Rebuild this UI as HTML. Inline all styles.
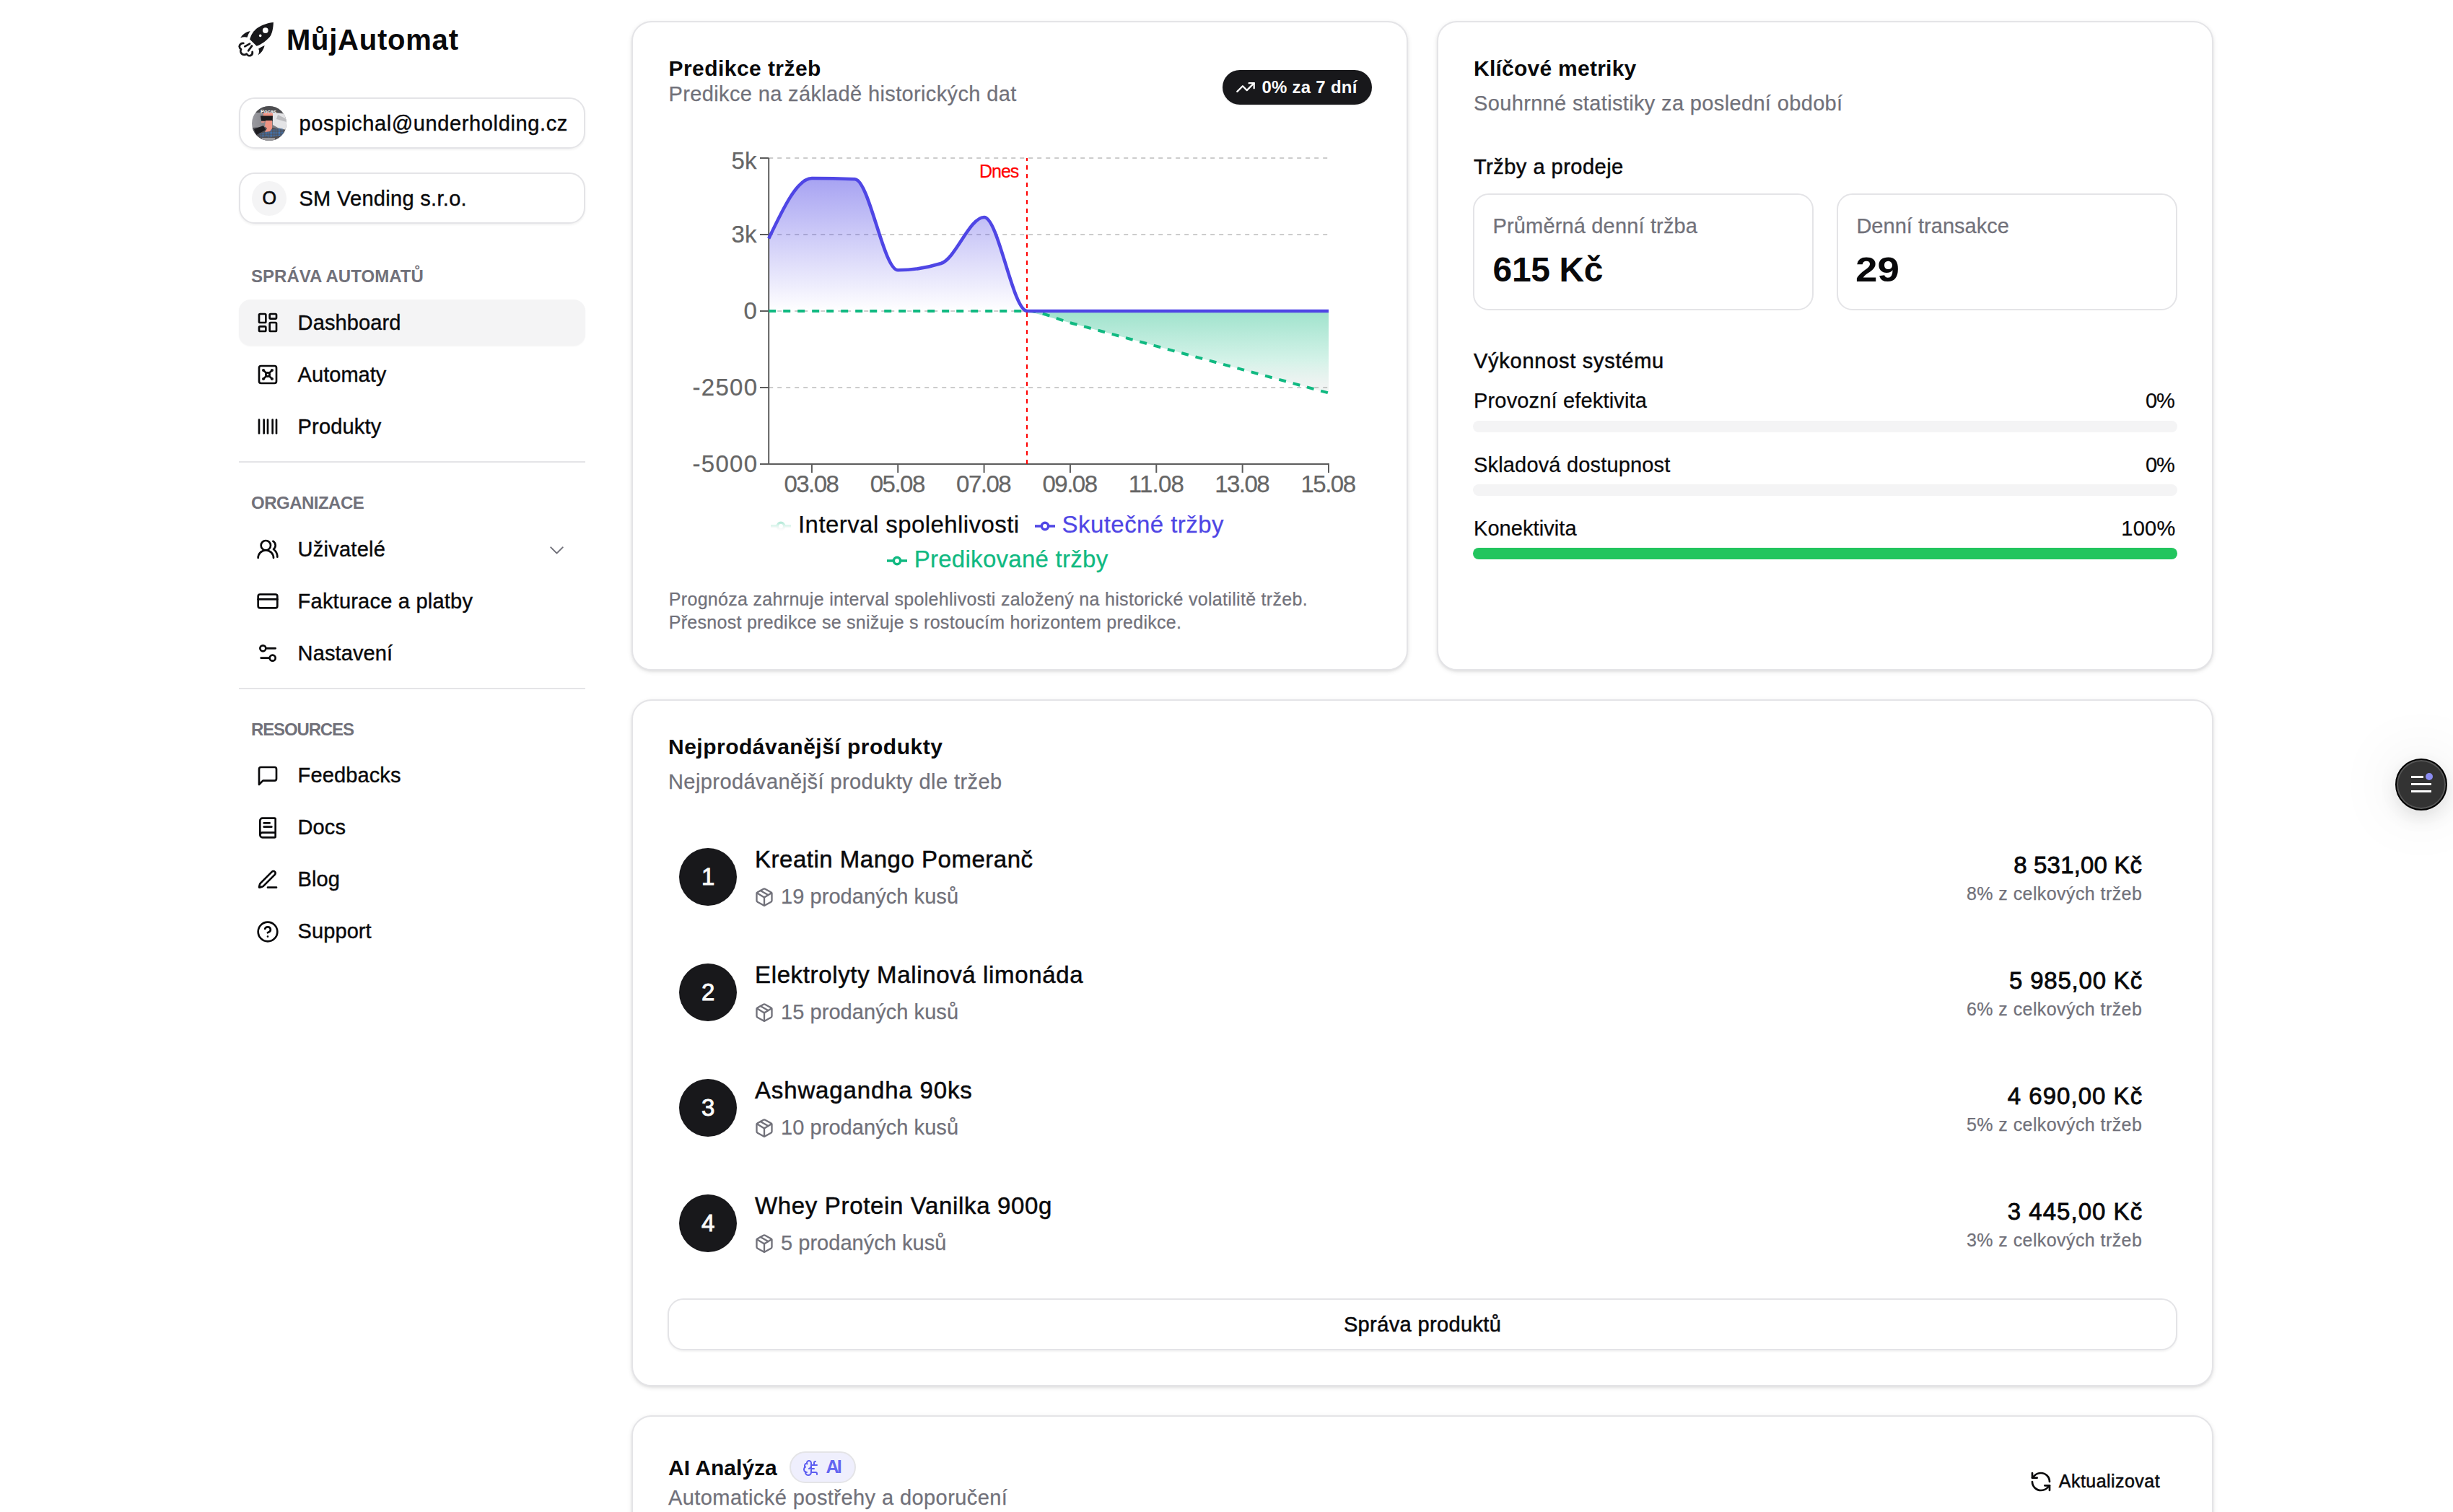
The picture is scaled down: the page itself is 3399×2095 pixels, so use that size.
<!DOCTYPE html><html><head><meta charset="utf-8"><style>
html,body{margin:0;padding:0;width:3399px;height:2095px;overflow:hidden;background:#fff;}
body{position:relative;font-family:"Liberation Sans",sans-serif;color:#09090b;}
.t{position:absolute;white-space:nowrap;font-family:"Liberation Sans",sans-serif;}
svg{overflow:visible}
</style></head><body>
<svg style="position:absolute;left:326px;top:26px" width="58" height="58" viewBox="0 0 58 58">
<path fill="#18181b" d="M52.9,5 C46,5.6 37,8.5 30.7,12.7 C26,16 22,21.5 20.1,28.4 L29.5,37.8 C36,35.5 43,30.5 47.9,24.9 C51,21 52.6,13 52.9,5 Z"/>
<circle cx="41.8" cy="16.1" r="3.9" fill="#fff"/><circle cx="34.7" cy="23.4" r="1.8" fill="#fff"/>
<path fill="#18181b" d="M20.7,17.1 Q11.5,19 7.1,26.5 Q12,24.6 16.5,25.7 Q18.2,20.8 20.7,17.1 Z"/>
<path fill="#18181b" d="M40.7,37 Q38.5,46 31.3,50.6 Q34.2,45.8 32.2,41.4 Q36.3,38.6 40.7,37 Z"/>
<path fill="none" stroke="#18181b" stroke-width="2.8" stroke-linecap="round" d="M13.3,38.4 L20,34.6 M18.2,44.3 L23,37.6"/>
<path fill="none" stroke="#18181b" stroke-width="2.8" stroke-linecap="round" stroke-linejoin="round" d="M11.3,33.8 C8.5,33.6 6,35.2 5.8,38.5 C5.6,40.5 7,41.6 8,42.4 C6.9,44.3 7.2,47.5 10,49.2 C12,50.3 14.3,49.6 15.7,48.7 C16.8,50.8 19.5,51.8 21.6,50.8 C23.6,49.8 24,47.6 23.7,46"/>
</svg>
<div class="t" style="left:396.90px;top:35px;font-size:40px;line-height:40px;font-weight:700;color:#09090b;letter-spacing:0.778px;">MůjAutomat</div>
<div style="position:absolute;left:331px;top:135px;width:480px;height:71px;box-sizing:border-box;border:2px solid #e4e4e7;border-radius:22px;background:#fff;box-shadow:0 2px 3px rgba(0,0,0,0.05)"></div>
<svg style="position:absolute;left:349px;top:147px" width="48" height="48" viewBox="0 0 48 48">
<defs><clipPath id="avc"><circle cx="24" cy="24" r="24"/></clipPath>
<pattern id="dots" width="2.2" height="2.2" patternUnits="userSpaceOnUse"><circle cx="1.1" cy="1.1" r="0.7" fill="#3b82d6"/></pattern>
<linearGradient id="avl" x1="0" y1="0" x2="1" y2="0"><stop offset="0" stop-color="#9a9aa0"/><stop offset="1" stop-color="#6a6a6e"/></linearGradient></defs>
<g clip-path="url(#avc)"><rect width="48" height="48" fill="url(#avl)"/>
<rect x="0" y="0" width="48" height="9" fill="#4d4d50"/>
<path d="M29 9 L48 11 L48 33 L36 30 L29 26 Z" fill="#e4e4e6"/>
<path d="M36 12 L48 18 L48 22 L34 18 Z" fill="#bdbdc0"/>
<path d="M0 30 L0 48 L48 48 L48 34 L30 30 L16 29 Z" fill="#505055"/>
<path d="M18 34 L42 30 L46 40 L22 44 Z" fill="url(#dots)"/>
<path d="M10 38 L20 36 L22 42 L12 44 Z" fill="url(#dots)" opacity="0.8"/>
<path d="M3 32 L16 27 L19 33 L6 40 Z" fill="#1c1c20"/>
<rect x="16" y="9" width="13" height="5" fill="#ee9484"/>
<path d="M12 13.5 L29 13.5 L28.5 21 L13 20.5 Z" fill="#1b1b1d"/>
<path d="M19 20 L28 20 L28 31 L25 35 L18 36 L21 31 L18 28 Z" fill="#ee9484"/>
<path d="M13 21 L18 21 L17 23 L13 23 Z" fill="#ee9484" opacity="0.8"/>
<text x="23" y="9.6" font-size="7.5" font-weight="700" fill="#f2f2f2" text-anchor="middle" font-family="Liberation Sans">Pocas</text>
<rect x="14" y="44" width="18" height="4" fill="#c8c8cc" opacity="0.6"/>
</g></svg>
<div class="t" style="left:414.60px;top:157px;font-size:29px;line-height:29px;font-weight:400;color:#09090b;letter-spacing:0.625px;-webkit-text-stroke:0.4px currentColor;">pospichal@underholding.cz</div>
<div style="position:absolute;left:331px;top:239px;width:480px;height:71px;box-sizing:border-box;border:2px solid #e4e4e7;border-radius:22px;background:#fff;box-shadow:0 2px 3px rgba(0,0,0,0.05)"></div>
<div style="position:absolute;left:349px;top:251px;width:48px;height:48px;box-sizing:border-box;border-radius:50%;background:#f4f4f5"></div>
<div class="t" style="left:363.50px;top:262px;font-size:25px;line-height:25px;font-weight:400;color:#09090b;letter-spacing:0.000px;-webkit-text-stroke:0.7px currentColor;">O</div>
<div class="t" style="left:414.40px;top:261px;font-size:29px;line-height:29px;font-weight:400;color:#09090b;letter-spacing:0.312px;-webkit-text-stroke:0.4px currentColor;">SM Vending s.r.o.</div>
<div class="t" style="left:348.00px;top:371px;font-size:24px;line-height:24px;font-weight:700;color:#71717a;letter-spacing:0.043px;">SPRÁVA AUTOMATŮ</div>
<div class="t" style="left:348.00px;top:684.5px;font-size:24px;line-height:24px;font-weight:700;color:#71717a;letter-spacing:-0.511px;">ORGANIZACE</div>
<div class="t" style="left:348.00px;top:999px;font-size:24px;line-height:24px;font-weight:700;color:#71717a;letter-spacing:-1.137px;">RESOURCES</div>
<div style="position:absolute;left:331px;top:415px;width:480px;height:64px;box-sizing:border-box;border-radius:16px;background:#f4f4f5;box-shadow:0 1px 2px rgba(0,0,0,0.04)"></div>
<svg style="position:absolute;left:355px;top:431px;" width="32" height="32" viewBox="0 0 24 24" fill="none" stroke="#09090b" stroke-width="2" stroke-linecap="round" stroke-linejoin="round"><rect width="7" height="9" x="3" y="3" rx="1"/><rect width="7" height="5" x="14" y="3" rx="1"/><rect width="7" height="9" x="14" y="12" rx="1"/><rect width="7" height="5" x="3" y="16" rx="1"/></svg>
<div class="t" style="left:412.60px;top:433px;font-size:29px;line-height:29px;font-weight:400;color:#09090b;letter-spacing:0.125px;-webkit-text-stroke:0.4px currentColor;">Dashboard</div>
<svg style="position:absolute;left:355px;top:503px;" width="32" height="32" viewBox="0 0 24 24" fill="none" stroke="#09090b" stroke-width="2" stroke-linecap="round" stroke-linejoin="round"><rect width="18" height="18" x="3" y="3" rx="2"/><circle cx="7.5" cy="7.5" r=".5" fill="currentColor"/><path d="m7.9 7.9 2.7 2.7"/><circle cx="16.5" cy="7.5" r=".5" fill="currentColor"/><path d="m13.4 10.6 2.7-2.7"/><circle cx="7.5" cy="16.5" r=".5" fill="currentColor"/><path d="m7.9 16.1 2.7-2.7"/><circle cx="16.5" cy="16.5" r=".5" fill="currentColor"/><path d="m13.4 13.4 2.7 2.7"/><circle cx="12" cy="12" r="2"/></svg>
<div class="t" style="left:412.60px;top:505px;font-size:29px;line-height:29px;font-weight:400;color:#09090b;letter-spacing:0.036px;-webkit-text-stroke:0.4px currentColor;">Automaty</div>
<svg style="position:absolute;left:355px;top:575px;" width="32" height="32" viewBox="0 0 24 24" fill="none" stroke="#09090b" stroke-width="2" stroke-linecap="round" stroke-linejoin="round"><path d="M3 5v14"/><path d="M8 5v14"/><path d="M12 5v14"/><path d="M17 5v14"/><path d="M21 5v14"/></svg>
<div class="t" style="left:412.60px;top:577px;font-size:29px;line-height:29px;font-weight:400;color:#09090b;letter-spacing:0.179px;-webkit-text-stroke:0.4px currentColor;">Produkty</div>
<svg style="position:absolute;left:355px;top:745px;" width="32" height="32" viewBox="0 0 24 24" fill="none" stroke="#09090b" stroke-width="2" stroke-linecap="round" stroke-linejoin="round"><path d="M18 21a8 8 0 0 0-16 0"/><circle cx="10" cy="8" r="5"/><path d="M22 20c0-3.37-2-6.5-4-8a5 5 0 0 0-.45-8.3"/></svg>
<div class="t" style="left:412.60px;top:747px;font-size:29px;line-height:29px;font-weight:400;color:#09090b;letter-spacing:0.250px;-webkit-text-stroke:0.4px currentColor;">Uživatelé</div>
<svg style="position:absolute;left:355px;top:817px;" width="32" height="32" viewBox="0 0 24 24" fill="none" stroke="#09090b" stroke-width="2" stroke-linecap="round" stroke-linejoin="round"><rect width="20" height="14" x="2" y="5" rx="2"/><line x1="2" x2="22" y1="10" y2="10"/></svg>
<div class="t" style="left:412.60px;top:819px;font-size:29px;line-height:29px;font-weight:400;color:#09090b;letter-spacing:0.221px;-webkit-text-stroke:0.4px currentColor;">Fakturace a platby</div>
<svg style="position:absolute;left:355px;top:889px;" width="32" height="32" viewBox="0 0 24 24" fill="none" stroke="#09090b" stroke-width="2" stroke-linecap="round" stroke-linejoin="round"><path d="M20 7h-9"/><path d="M14 17H5"/><circle cx="17" cy="17" r="3"/><circle cx="7" cy="7" r="3"/></svg>
<div class="t" style="left:412.60px;top:891px;font-size:29px;line-height:29px;font-weight:400;color:#09090b;letter-spacing:0.125px;-webkit-text-stroke:0.4px currentColor;">Nastavení</div>
<svg style="position:absolute;left:355px;top:1059px;" width="32" height="32" viewBox="0 0 24 24" fill="none" stroke="#09090b" stroke-width="2" stroke-linecap="round" stroke-linejoin="round"><path d="M21 15a2 2 0 0 1-2 2H7l-4 4V5a2 2 0 0 1 2-2h14a2 2 0 0 1 2 2z"/></svg>
<div class="t" style="left:412.60px;top:1060px;font-size:29px;line-height:29px;font-weight:400;color:#09090b;letter-spacing:0.125px;-webkit-text-stroke:0.4px currentColor;">Feedbacks</div>
<svg style="position:absolute;left:355px;top:1131px;" width="32" height="32" viewBox="0 0 24 24" fill="none" stroke="#09090b" stroke-width="2" stroke-linecap="round" stroke-linejoin="round"><path d="M4 19.5v-15A2.5 2.5 0 0 1 6.5 2H19a1 1 0 0 1 1 1v18a1 1 0 0 1-1 1H6.5a1 1 0 0 1 0-5H20"/><path d="M8 11h8"/><path d="M8 7h6"/></svg>
<div class="t" style="left:412.60px;top:1132px;font-size:29px;line-height:29px;font-weight:400;color:#09090b;letter-spacing:0.083px;-webkit-text-stroke:0.4px currentColor;">Docs</div>
<svg style="position:absolute;left:355px;top:1203px;" width="32" height="32" viewBox="0 0 24 24" fill="none" stroke="#09090b" stroke-width="2" stroke-linecap="round" stroke-linejoin="round"><path d="M12 20h9"/><path d="M16.376 3.622a1 1 0 0 1 3.002 3.002L7.368 18.635a2 2 0 0 1-.855.506l-2.872.838a.5.5 0 0 1-.62-.62l.838-2.872a2 2 0 0 1 .506-.854z"/></svg>
<div class="t" style="left:412.60px;top:1204px;font-size:29px;line-height:29px;font-weight:400;color:#09090b;letter-spacing:0.083px;-webkit-text-stroke:0.4px currentColor;">Blog</div>
<svg style="position:absolute;left:355px;top:1275px;" width="32" height="32" viewBox="0 0 24 24" fill="none" stroke="#09090b" stroke-width="2" stroke-linecap="round" stroke-linejoin="round"><circle cx="12" cy="12" r="10"/><path d="M9.09 9a3 3 0 0 1 5.83 1c0 2-3 3-3 3"/><path d="M12 17h.01"/></svg>
<div class="t" style="left:412.60px;top:1276px;font-size:29px;line-height:29px;font-weight:400;color:#09090b;letter-spacing:0.083px;-webkit-text-stroke:0.4px currentColor;">Support</div>
<svg style="position:absolute;left:755px;top:746px;" width="33" height="33" viewBox="0 0 24 24" fill="none" stroke="#71717a" stroke-width="1.4" stroke-linecap="round" stroke-linejoin="round"><path d="m6 9 6 6 6-6"/></svg>
<div style="position:absolute;left:331px;top:639px;width:480px;height:2px;box-sizing:border-box;background:#e4e4e7"></div>
<div style="position:absolute;left:331px;top:953px;width:480px;height:2px;box-sizing:border-box;background:#e4e4e7"></div>
<div style="position:absolute;left:875px;top:29px;width:1076px;height:900px;box-sizing:border-box;border:2px solid #e4e4e7;border-radius:28px;background:#fff;box-shadow:0 2px 6px rgba(0,0,0,0.1),0 2px 4px -2px rgba(0,0,0,0.1)"></div>
<div class="t" style="left:926.50px;top:80px;font-size:30px;line-height:30px;font-weight:700;color:#09090b;letter-spacing:0.446px;">Predikce tržeb</div>
<div class="t" style="left:926.50px;top:116px;font-size:29px;line-height:29px;font-weight:400;color:#71717a;letter-spacing:0.363px;-webkit-text-stroke:0.25px currentColor;">Predikce na základě historických dat</div>
<div style="position:absolute;left:1694px;top:97px;width:207px;height:48px;box-sizing:border-box;border-radius:24px;background:#18181b;box-shadow:0 1px 2px rgba(0,0,0,0.1)"></div>
<svg style="position:absolute;left:1711.8px;top:106.8px;" width="28" height="28" viewBox="0 0 24 24" fill="none" stroke="#fafafa" stroke-width="2" stroke-linecap="round" stroke-linejoin="round"><polyline points="22 7 13.5 15.5 8.5 10.5 2 17"/><polyline points="16 7 22 7 22 13"/></svg>
<div class="t" style="left:1748.50px;top:109px;font-size:24px;line-height:24px;font-weight:700;color:#fafafa;letter-spacing:0.250px;">0% za 7 dní</div>
<svg style="position:absolute;left:0;top:0" width="3399" height="2095" viewBox="0 0 3399 2095">
<defs><linearGradient id="gA" x1="0" y1="0" x2="0" y2="1"><stop offset="0" stop-color="#4f46e5" stop-opacity="0.5"/><stop offset="1" stop-color="#4f46e5" stop-opacity="0"/></linearGradient><linearGradient id="gL" x1="0" y1="0" x2="0" y2="1"><stop offset="0" stop-color="#10b981" stop-opacity="0.3"/><stop offset="0.5" stop-color="#10b981" stop-opacity="0.12"/><stop offset="1" stop-color="#888" stop-opacity="0.03"/></linearGradient><linearGradient id="gP" x1="0" y1="0" x2="0" y2="1"><stop offset="0" stop-color="#10b981" stop-opacity="0.4"/><stop offset="0.6" stop-color="#10b981" stop-opacity="0.18"/><stop offset="1" stop-color="#9a9a9a" stop-opacity="0.1"/></linearGradient></defs>
<line x1="1065.2" x2="1841" y1="219" y2="219" stroke="#ccc" stroke-width="2" stroke-dasharray="6 6"/>
<line x1="1065.2" x2="1841" y1="325" y2="325" stroke="#ccc" stroke-width="2" stroke-dasharray="6 6"/>
<line x1="1065.2" x2="1841" y1="431" y2="431" stroke="#ccc" stroke-width="2" stroke-dasharray="6 6"/>
<line x1="1065.2" x2="1841" y1="537" y2="537" stroke="#ccc" stroke-width="2" stroke-dasharray="6 6"/>
<path d="M1065.20,330.60C1085.09,288.80 1104.98,247.00 1124.88,247.00C1144.77,247.00 1164.66,247.43 1184.55,248.30C1204.45,249.17 1224.34,374.30 1244.23,374.30C1264.12,374.30 1284.02,371.20 1303.91,365.00C1323.80,358.80 1343.69,301.00 1363.58,301.00C1383.48,301.00 1403.37,431.00 1423.26,431.00C1443.15,431.00 1463.05,431.00 1482.94,431.00C1502.83,431.00 1522.72,431.00 1542.62,431.00C1562.51,431.00 1582.40,431.00 1602.29,431.00C1622.18,431.00 1642.08,431.00 1661.97,431.00C1681.86,431.00 1701.75,431.00 1721.65,431.00C1741.54,431.00 1761.43,431.00 1781.32,431.00C1801.22,431.00 1821.11,431.00 1841.00,431.00L1841.00,431L1065.20,431Z" fill="url(#gA)"/>
<path d="M1423.26,431L1841.00,431L1841.00,544.5L1423.26,431Z" fill="url(#gP)"/>
<line x1="1065.2" x2="1065.2" y1="219" y2="643" stroke="#5c5c5c" stroke-width="2"/>
<line x1="1065.2" x2="1842" y1="643" y2="643" stroke="#5c5c5c" stroke-width="2"/>
<line x1="1053" x2="1065.2" y1="219" y2="219" stroke="#5c5c5c" stroke-width="2"/>
<line x1="1053" x2="1065.2" y1="325" y2="325" stroke="#5c5c5c" stroke-width="2"/>
<line x1="1053" x2="1065.2" y1="431" y2="431" stroke="#5c5c5c" stroke-width="2"/>
<line x1="1053" x2="1065.2" y1="537" y2="537" stroke="#5c5c5c" stroke-width="2"/>
<line x1="1053" x2="1065.2" y1="643" y2="643" stroke="#5c5c5c" stroke-width="2"/>
<line x1="1124.88" x2="1124.88" y1="643" y2="655" stroke="#5c5c5c" stroke-width="2"/>
<line x1="1244.23" x2="1244.23" y1="643" y2="655" stroke="#5c5c5c" stroke-width="2"/>
<line x1="1363.58" x2="1363.58" y1="643" y2="655" stroke="#5c5c5c" stroke-width="2"/>
<line x1="1482.94" x2="1482.94" y1="643" y2="655" stroke="#5c5c5c" stroke-width="2"/>
<line x1="1602.29" x2="1602.29" y1="643" y2="655" stroke="#5c5c5c" stroke-width="2"/>
<line x1="1721.65" x2="1721.65" y1="643" y2="655" stroke="#5c5c5c" stroke-width="2"/>
<line x1="1841.00" x2="1841.00" y1="643" y2="655" stroke="#5c5c5c" stroke-width="2"/>
<path d="M1065.20,431.00C1085.09,431.00 1104.98,431.00 1124.88,431.00C1144.77,431.00 1164.66,431.00 1184.55,431.00C1204.45,431.00 1224.34,431.00 1244.23,431.00C1264.12,431.00 1284.02,431.00 1303.91,431.00C1323.80,431.00 1343.69,431.00 1363.58,431.00C1383.48,431.00 1403.37,431.00 1423.26,431.00C1443.15,431.00 1463.05,441.81 1482.94,447.21C1502.83,452.62 1522.72,458.02 1542.62,463.43C1562.51,468.83 1582.40,474.24 1602.29,479.64C1622.18,485.05 1642.08,490.45 1661.97,495.86C1681.86,501.26 1701.75,506.67 1721.65,512.07C1741.54,517.48 1761.43,522.88 1781.32,528.29C1801.22,533.69 1821.11,539.10 1841.00,544.50" fill="none" stroke="#10b981" stroke-width="4" stroke-dasharray="10 10"/>
<path d="M1065.20,330.60C1085.09,288.80 1104.98,247.00 1124.88,247.00C1144.77,247.00 1164.66,247.43 1184.55,248.30C1204.45,249.17 1224.34,374.30 1244.23,374.30C1264.12,374.30 1284.02,371.20 1303.91,365.00C1323.80,358.80 1343.69,301.00 1363.58,301.00C1383.48,301.00 1403.37,431.00 1423.26,431.00C1443.15,431.00 1463.05,431.00 1482.94,431.00C1502.83,431.00 1522.72,431.00 1542.62,431.00C1562.51,431.00 1582.40,431.00 1602.29,431.00C1622.18,431.00 1642.08,431.00 1661.97,431.00C1681.86,431.00 1701.75,431.00 1721.65,431.00C1741.54,431.00 1761.43,431.00 1781.32,431.00C1801.22,431.00 1821.11,431.00 1841.00,431.00" fill="none" stroke="#4f46e5" stroke-width="4.6"/>
<line x1="1423" x2="1423" y1="219" y2="643" stroke="#ff0000" stroke-width="2" stroke-dasharray="6 6" stroke-dashoffset="2"/>
<g transform="translate(1068,715) scale(0.875)"><path stroke-width="4" fill="none" stroke="url(#gL)" d="M0,16h10.667A5.333,5.333,0,1,1,21.333,16H32M21.333,16A5.333,5.333,0,1,1,10.667,16"/></g>
<g transform="translate(1434,715) scale(0.875)" opacity="1"><path stroke-width="4" fill="none" stroke="#4f46e5" d="M0,16h10.667A5.333,5.333,0,1,1,21.333,16H32M21.333,16A5.333,5.333,0,1,1,10.667,16"/></g>
<g transform="translate(1229,763) scale(0.875)" opacity="1"><path stroke-width="4" fill="none" stroke="#10b981" d="M0,16h10.667A5.333,5.333,0,1,1,21.333,16H32M21.333,16A5.333,5.333,0,1,1,10.667,16"/></g>
</svg>
<div class="t" style="left:1013.60px;top:206px;font-size:33px;line-height:33px;font-weight:400;color:#666;letter-spacing:0.000px;-webkit-text-stroke:0.25px currentColor;">5k</div>
<div class="t" style="left:1013.60px;top:308px;font-size:33px;line-height:33px;font-weight:400;color:#666;letter-spacing:0.000px;-webkit-text-stroke:0.25px currentColor;">3k</div>
<div class="t" style="left:1030.60px;top:414px;font-size:33px;line-height:33px;font-weight:400;color:#666;letter-spacing:0.000px;-webkit-text-stroke:0.25px currentColor;">0</div>
<div class="t" style="left:959.60px;top:520px;font-size:33px;line-height:33px;font-weight:400;color:#666;letter-spacing:1.250px;-webkit-text-stroke:0.25px currentColor;">-2500</div>
<div class="t" style="left:959.60px;top:626px;font-size:33px;line-height:33px;font-weight:400;color:#666;letter-spacing:1.250px;-webkit-text-stroke:0.25px currentColor;">-5000</div>
<div class="t" style="left:1086.38px;top:654px;font-size:33px;line-height:33px;font-weight:400;color:#666;letter-spacing:-1.500px;-webkit-text-stroke:0.25px currentColor;">03.08</div>
<div class="t" style="left:1205.73px;top:654px;font-size:33px;line-height:33px;font-weight:400;color:#666;letter-spacing:-1.500px;-webkit-text-stroke:0.25px currentColor;">05.08</div>
<div class="t" style="left:1325.08px;top:654px;font-size:33px;line-height:33px;font-weight:400;color:#666;letter-spacing:-1.500px;-webkit-text-stroke:0.25px currentColor;">07.08</div>
<div class="t" style="left:1444.44px;top:654px;font-size:33px;line-height:33px;font-weight:400;color:#666;letter-spacing:-1.500px;-webkit-text-stroke:0.25px currentColor;">09.08</div>
<div class="t" style="left:1563.79px;top:654px;font-size:33px;line-height:33px;font-weight:400;color:#666;letter-spacing:-0.750px;-webkit-text-stroke:0.25px currentColor;">11.08</div>
<div class="t" style="left:1683.15px;top:654px;font-size:33px;line-height:33px;font-weight:400;color:#666;letter-spacing:-1.500px;-webkit-text-stroke:0.25px currentColor;">13.08</div>
<div class="t" style="left:1802.50px;top:654px;font-size:33px;line-height:33px;font-weight:400;color:#666;letter-spacing:-1.500px;-webkit-text-stroke:0.25px currentColor;">15.08</div>
<div class="t" style="left:1357.00px;top:225px;font-size:25px;line-height:25px;font-weight:400;color:#ff0000;letter-spacing:-1.000px;-webkit-text-stroke:0.25px currentColor;">Dnes</div>
<div class="t" style="left:1106.00px;top:710px;font-size:33px;line-height:33px;font-weight:400;color:#09090b;letter-spacing:0.429px;-webkit-text-stroke:0.25px currentColor;">Interval spolehlivosti</div>
<div class="t" style="left:1471.60px;top:710px;font-size:33px;line-height:33px;font-weight:400;color:#4f46e5;letter-spacing:0.431px;-webkit-text-stroke:0.25px currentColor;">Skutečné tržby</div>
<div class="t" style="left:1266.70px;top:758px;font-size:33px;line-height:33px;font-weight:400;color:#10b981;letter-spacing:0.275px;-webkit-text-stroke:0.25px currentColor;">Predikované tržby</div>
<div class="t" style="left:926.80px;top:818px;font-size:25px;line-height:25px;font-weight:400;color:#71717a;letter-spacing:0.309px;-webkit-text-stroke:0.25px currentColor;">Prognóza zahrnuje interval spolehlivosti založený na historické volatilitě tržeb.</div>
<div class="t" style="left:926.80px;top:850px;font-size:25px;line-height:25px;font-weight:400;color:#71717a;letter-spacing:0.280px;-webkit-text-stroke:0.25px currentColor;">Přesnost predikce se snižuje s rostoucím horizontem predikce.</div>
<div style="position:absolute;left:1991px;top:29px;width:1076px;height:900px;box-sizing:border-box;border:2px solid #e4e4e7;border-radius:28px;background:#fff;box-shadow:0 2px 6px rgba(0,0,0,0.1),0 2px 4px -2px rgba(0,0,0,0.1)"></div>
<div class="t" style="left:2042.00px;top:80px;font-size:30px;line-height:30px;font-weight:700;color:#09090b;letter-spacing:0.250px;">Klíčové metriky</div>
<div class="t" style="left:2042.00px;top:129px;font-size:29px;line-height:29px;font-weight:400;color:#71717a;letter-spacing:0.351px;-webkit-text-stroke:0.25px currentColor;">Souhrnné statistiky za poslední období</div>
<div class="t" style="left:2042.00px;top:217px;font-size:29px;line-height:29px;font-weight:400;color:#09090b;letter-spacing:0.486px;-webkit-text-stroke:0.5px currentColor;">Tržby a prodeje</div>
<div style="position:absolute;left:2041px;top:268px;width:472px;height:162px;box-sizing:border-box;border:2px solid #e4e4e7;border-radius:22px;background:#fff"></div>
<div style="position:absolute;left:2545px;top:268px;width:472px;height:162px;box-sizing:border-box;border:2px solid #e4e4e7;border-radius:22px;background:#fff"></div>
<div class="t" style="left:2068.50px;top:299px;font-size:29px;line-height:29px;font-weight:400;color:#71717a;letter-spacing:0.158px;-webkit-text-stroke:0.25px currentColor;">Průměrná denní tržba</div>
<div class="t" style="left:2068.60px;top:350px;font-size:48px;line-height:48px;font-weight:700;color:#09090b;letter-spacing:-0.400px;">615 Kč</div>
<div class="t" style="left:2572.40px;top:299px;font-size:29px;line-height:29px;font-weight:400;color:#71717a;letter-spacing:0.029px;-webkit-text-stroke:0.25px currentColor;">Denní transakce</div>
<div class="t" style="left:2571.20px;top:350px;font-size:48px;line-height:48px;font-weight:700;color:#09090b;letter-spacing:0.000px;transform:scaleX(1.14);transform-origin:0 0;">29</div>
<div class="t" style="left:2042.00px;top:486px;font-size:29px;line-height:29px;font-weight:400;color:#09090b;letter-spacing:0.738px;-webkit-text-stroke:0.5px currentColor;">Výkonnost systému</div>
<div class="t" style="left:2042.00px;top:541px;font-size:29px;line-height:29px;font-weight:400;color:#09090b;letter-spacing:0.167px;-webkit-text-stroke:0.25px currentColor;">Provozní efektivita</div>
<div class="t" style="left:2973.10px;top:541px;font-size:29px;line-height:29px;font-weight:400;color:#09090b;letter-spacing:-1.100px;-webkit-text-stroke:0.25px currentColor;">0%</div>
<div style="position:absolute;left:2041px;top:583px;width:976px;height:16px;box-sizing:border-box;border-radius:8px;background:#f4f4f5"></div>
<div class="t" style="left:2042.00px;top:630px;font-size:29px;line-height:29px;font-weight:400;color:#09090b;letter-spacing:0.170px;-webkit-text-stroke:0.25px currentColor;">Skladová dostupnost</div>
<div class="t" style="left:2973.10px;top:630px;font-size:29px;line-height:29px;font-weight:400;color:#09090b;letter-spacing:-1.100px;-webkit-text-stroke:0.25px currentColor;">0%</div>
<div style="position:absolute;left:2041px;top:671px;width:976px;height:16px;box-sizing:border-box;border-radius:8px;background:#f4f4f5"></div>
<div class="t" style="left:2042.00px;top:718px;font-size:29px;line-height:29px;font-weight:400;color:#09090b;letter-spacing:0.070px;-webkit-text-stroke:0.25px currentColor;">Konektivita</div>
<div class="t" style="left:2939.30px;top:718px;font-size:29px;line-height:29px;font-weight:400;color:#09090b;letter-spacing:0.233px;-webkit-text-stroke:0.25px currentColor;">100%</div>
<div style="position:absolute;left:2041px;top:759px;width:976px;height:16px;box-sizing:border-box;border-radius:8px;background:#f4f4f5"></div>
<div style="position:absolute;left:2041px;top:759px;width:976px;height:16px;box-sizing:border-box;border-radius:8px;background:#22c55e"></div>
<div style="position:absolute;left:875px;top:969px;width:2192px;height:952px;box-sizing:border-box;border:2px solid #e4e4e7;border-radius:28px;background:#fff;box-shadow:0 2px 6px rgba(0,0,0,0.1),0 2px 4px -2px rgba(0,0,0,0.1)"></div>
<div class="t" style="left:926.00px;top:1020px;font-size:30px;line-height:30px;font-weight:700;color:#09090b;letter-spacing:0.496px;">Nejprodávanější produkty</div>
<div class="t" style="left:926.00px;top:1069px;font-size:29px;line-height:29px;font-weight:400;color:#71717a;letter-spacing:0.424px;-webkit-text-stroke:0.25px currentColor;">Nejprodávanější produkty dle tržeb</div>
<div style="position:absolute;left:941px;top:1175px;width:80px;height:80px;box-sizing:border-box;border-radius:50%;background:#18181b"></div>
<div class="t" style="left:972.00px;top:1198px;font-size:33px;line-height:33px;font-weight:400;color:#fafafa;letter-spacing:0.000px;-webkit-text-stroke:0.9px currentColor;">1</div>
<div class="t" style="left:1046.00px;top:1174px;font-size:33px;line-height:33px;font-weight:400;color:#09090b;letter-spacing:0.514px;-webkit-text-stroke:0.5px currentColor;">Kreatin Mango Pomeranč</div>
<svg style="position:absolute;left:1045px;top:1229px;" width="28" height="28" viewBox="0 0 24 24" fill="none" stroke="#71717a" stroke-width="2" stroke-linecap="round" stroke-linejoin="round"><path d="M11 21.73a2 2 0 0 0 2 0l7-4A2 2 0 0 0 21 16V8a2 2 0 0 0-1-1.73l-7-4a2 2 0 0 0-2 0l-7 4A2 2 0 0 0 3 8v8a2 2 0 0 0 1 1.73z"/><path d="M12 22V12"/><path d="m3.3 7 7.703 4.734a2 2 0 0 0 1.994 0L20.7 7"/><path d="m7.5 4.27 9 5.15"/></svg>
<div class="t" style="left:1082.00px;top:1228px;font-size:29px;line-height:29px;font-weight:400;color:#71717a;letter-spacing:0.060px;-webkit-text-stroke:0.25px currentColor;">19 prodaných kusů</div>
<div class="t" style="left:2790.20px;top:1182px;font-size:33px;line-height:33px;font-weight:400;color:#09090b;letter-spacing:0.180px;-webkit-text-stroke:0.8px currentColor;">8 531,00 Kč</div>
<div class="t" style="left:2725.00px;top:1226px;font-size:25px;line-height:25px;font-weight:400;color:#71717a;letter-spacing:0.421px;-webkit-text-stroke:0.25px currentColor;">8% z celkových tržeb</div>
<div style="position:absolute;left:941px;top:1335px;width:80px;height:80px;box-sizing:border-box;border-radius:50%;background:#18181b"></div>
<div class="t" style="left:972.00px;top:1358px;font-size:33px;line-height:33px;font-weight:400;color:#fafafa;letter-spacing:0.000px;-webkit-text-stroke:0.9px currentColor;">2</div>
<div class="t" style="left:1046.00px;top:1334px;font-size:33px;line-height:33px;font-weight:400;color:#09090b;letter-spacing:0.643px;-webkit-text-stroke:0.5px currentColor;">Elektrolyty Malinová limonáda</div>
<svg style="position:absolute;left:1045px;top:1389px;" width="28" height="28" viewBox="0 0 24 24" fill="none" stroke="#71717a" stroke-width="2" stroke-linecap="round" stroke-linejoin="round"><path d="M11 21.73a2 2 0 0 0 2 0l7-4A2 2 0 0 0 21 16V8a2 2 0 0 0-1-1.73l-7-4a2 2 0 0 0-2 0l-7 4A2 2 0 0 0 3 8v8a2 2 0 0 0 1 1.73z"/><path d="M12 22V12"/><path d="m3.3 7 7.703 4.734a2 2 0 0 0 1.994 0L20.7 7"/><path d="m7.5 4.27 9 5.15"/></svg>
<div class="t" style="left:1082.00px;top:1388px;font-size:29px;line-height:29px;font-weight:400;color:#71717a;letter-spacing:0.060px;-webkit-text-stroke:0.25px currentColor;">15 prodaných kusů</div>
<div class="t" style="left:2784.10px;top:1342px;font-size:33px;line-height:33px;font-weight:400;color:#09090b;letter-spacing:0.790px;-webkit-text-stroke:0.8px currentColor;">5 985,00 Kč</div>
<div class="t" style="left:2725.00px;top:1386px;font-size:25px;line-height:25px;font-weight:400;color:#71717a;letter-spacing:0.421px;-webkit-text-stroke:0.25px currentColor;">6% z celkových tržeb</div>
<div style="position:absolute;left:941px;top:1495px;width:80px;height:80px;box-sizing:border-box;border-radius:50%;background:#18181b"></div>
<div class="t" style="left:972.00px;top:1518px;font-size:33px;line-height:33px;font-weight:400;color:#fafafa;letter-spacing:0.000px;-webkit-text-stroke:0.9px currentColor;">3</div>
<div class="t" style="left:1046.00px;top:1494px;font-size:33px;line-height:33px;font-weight:400;color:#09090b;letter-spacing:0.853px;-webkit-text-stroke:0.5px currentColor;">Ashwagandha 90ks</div>
<svg style="position:absolute;left:1045px;top:1549px;" width="28" height="28" viewBox="0 0 24 24" fill="none" stroke="#71717a" stroke-width="2" stroke-linecap="round" stroke-linejoin="round"><path d="M11 21.73a2 2 0 0 0 2 0l7-4A2 2 0 0 0 21 16V8a2 2 0 0 0-1-1.73l-7-4a2 2 0 0 0-2 0l-7 4A2 2 0 0 0 3 8v8a2 2 0 0 0 1 1.73z"/><path d="M12 22V12"/><path d="m3.3 7 7.703 4.734a2 2 0 0 0 1.994 0L20.7 7"/><path d="m7.5 4.27 9 5.15"/></svg>
<div class="t" style="left:1082.00px;top:1548px;font-size:29px;line-height:29px;font-weight:400;color:#71717a;letter-spacing:0.060px;-webkit-text-stroke:0.25px currentColor;">10 prodaných kusů</div>
<div class="t" style="left:2781.80px;top:1502px;font-size:33px;line-height:33px;font-weight:400;color:#09090b;letter-spacing:1.020px;-webkit-text-stroke:0.8px currentColor;">4 690,00 Kč</div>
<div class="t" style="left:2725.00px;top:1546px;font-size:25px;line-height:25px;font-weight:400;color:#71717a;letter-spacing:0.421px;-webkit-text-stroke:0.25px currentColor;">5% z celkových tržeb</div>
<div style="position:absolute;left:941px;top:1655px;width:80px;height:80px;box-sizing:border-box;border-radius:50%;background:#18181b"></div>
<div class="t" style="left:972.00px;top:1678px;font-size:33px;line-height:33px;font-weight:400;color:#fafafa;letter-spacing:0.000px;-webkit-text-stroke:0.9px currentColor;">4</div>
<div class="t" style="left:1046.00px;top:1654px;font-size:33px;line-height:33px;font-weight:400;color:#09090b;letter-spacing:0.658px;-webkit-text-stroke:0.5px currentColor;">Whey Protein Vanilka 900g</div>
<svg style="position:absolute;left:1045px;top:1709px;" width="28" height="28" viewBox="0 0 24 24" fill="none" stroke="#71717a" stroke-width="2" stroke-linecap="round" stroke-linejoin="round"><path d="M11 21.73a2 2 0 0 0 2 0l7-4A2 2 0 0 0 21 16V8a2 2 0 0 0-1-1.73l-7-4a2 2 0 0 0-2 0l-7 4A2 2 0 0 0 3 8v8a2 2 0 0 0 1 1.73z"/><path d="M12 22V12"/><path d="m3.3 7 7.703 4.734a2 2 0 0 0 1.994 0L20.7 7"/><path d="m7.5 4.27 9 5.15"/></svg>
<div class="t" style="left:1082.00px;top:1708px;font-size:29px;line-height:29px;font-weight:400;color:#71717a;letter-spacing:0.027px;-webkit-text-stroke:0.25px currentColor;">5 prodaných kusů</div>
<div class="t" style="left:2781.80px;top:1662px;font-size:33px;line-height:33px;font-weight:400;color:#09090b;letter-spacing:1.020px;-webkit-text-stroke:0.8px currentColor;">3 445,00 Kč</div>
<div class="t" style="left:2725.00px;top:1706px;font-size:25px;line-height:25px;font-weight:400;color:#71717a;letter-spacing:0.421px;-webkit-text-stroke:0.25px currentColor;">3% z celkových tržeb</div>
<div style="position:absolute;left:925px;top:1799px;width:2092px;height:72px;box-sizing:border-box;border:2px solid #e4e4e7;border-radius:22px;background:#fff;box-shadow:0 2px 3px rgba(0,0,0,0.05)"></div>
<div class="t" style="left:1861.90px;top:1821px;font-size:29px;line-height:29px;font-weight:400;color:#09090b;letter-spacing:0.371px;-webkit-text-stroke:0.5px currentColor;">Správa produktů</div>
<div style="position:absolute;left:875px;top:1961px;width:2192px;height:239px;box-sizing:border-box;border:2px solid #e4e4e7;border-radius:28px;background:#fff;box-shadow:0 2px 6px rgba(0,0,0,0.1),0 2px 4px -2px rgba(0,0,0,0.1)"></div>
<div class="t" style="left:926.00px;top:2019px;font-size:30px;line-height:30px;font-weight:700;color:#09090b;letter-spacing:0.022px;">AI Analýza</div>
<div style="position:absolute;left:1094px;top:2011px;width:92px;height:44px;box-sizing:border-box;border:2px solid #e4e4e7;border-radius:22px;background:#efeffd"></div>
<svg style="position:absolute;left:1111.5px;top:2021.5px;" width="24" height="24" viewBox="0 0 24 24" fill="none" stroke="#5b5cf0" stroke-width="2" stroke-linecap="round" stroke-linejoin="round"><path d="M12 5a3 3 0 1 0-5.997.125 4 4 0 0 0-2.526 5.77 4 4 0 0 0 .556 6.588A4 4 0 1 0 12 18Z"/><path d="M9 13a4.5 4.5 0 0 0 3-4"/><path d="M6.003 5.125A3 3 0 0 0 6.401 6.5"/><path d="M3.477 10.896a4 4 0 0 1 .585-.396"/><path d="M6 18a4 4 0 0 1-1.967-.516"/><path d="M12 13h4"/><path d="M12 18h6a2 2 0 0 1 2 2v1"/><path d="M12 8h8"/><path d="M16 8V5a2 2 0 0 1 2-2"/></svg>
<div class="t" style="left:1144.40px;top:2020px;font-size:25px;line-height:25px;font-weight:700;color:#6366f1;letter-spacing:-2.800px;">AI</div>
<div class="t" style="left:926.00px;top:2061px;font-size:29px;line-height:29px;font-weight:400;color:#71717a;letter-spacing:0.428px;-webkit-text-stroke:0.25px currentColor;">Automatické postřehy a doporučení</div>
<svg style="position:absolute;left:2812px;top:2037px;" width="32" height="32" viewBox="0 0 24 24" fill="none" stroke="#09090b" stroke-width="2" stroke-linecap="round" stroke-linejoin="round"><path d="M21 12a9 9 0 0 0-9-9 9.75 9.75 0 0 0-6.74 2.74L3 8"/><path d="M3 3v5h5"/><path d="M3 12a9 9 0 0 0 9 9 9.75 9.75 0 0 0 6.74-2.74L21 16"/><path d="M16 16h5v5"/></svg>
<div class="t" style="left:2852.80px;top:2040px;font-size:25px;line-height:25px;font-weight:400;color:#09090b;letter-spacing:0.455px;-webkit-text-stroke:0.5px currentColor;">Aktualizovat</div>
<div style="position:absolute;left:3319px;top:1051px;width:72px;height:72px;box-sizing:border-box;border-radius:50%;background:#333;border:2.5px solid #000;box-shadow:0 0 0 2px #555 inset,0 10px 24px rgba(0,0,0,0.10),0 0 90px rgba(0,0,0,0.10)"></div>
<div style="position:absolute;left:3341px;top:1075px;width:17px;height:3px;box-sizing:border-box;background:#fff"></div>
<div style="position:absolute;left:3341px;top:1085px;width:28px;height:3px;box-sizing:border-box;background:#fff"></div>
<div style="position:absolute;left:3341px;top:1095px;width:28px;height:3px;box-sizing:border-box;background:#fff"></div>
<div style="position:absolute;left:3361px;top:1071px;width:10px;height:10px;box-sizing:border-box;border-radius:50%;background:#8b8cf2"></div>
</body></html>
